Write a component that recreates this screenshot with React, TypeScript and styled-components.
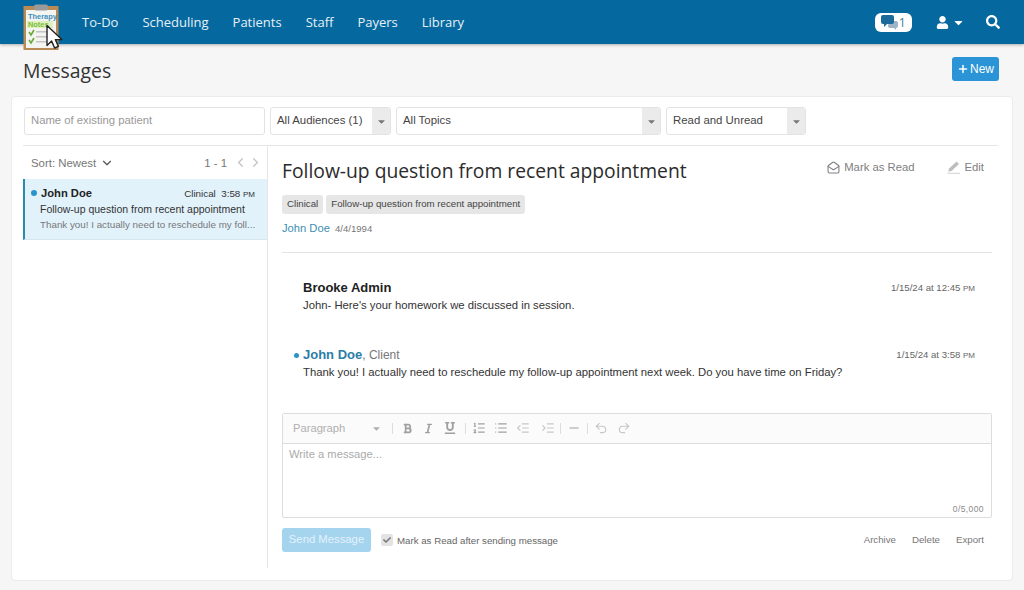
import React from 'react';
import styled, { createGlobalStyle } from 'styled-components';
import { FaBold, FaCaretDown, FaCheck, FaItalic, FaSearch, FaUnderline, FaUser } from 'react-icons/fa';
import {
    ChevronDown,
    ChevronLeft,
    ChevronRight,
    IndentDecrease,
    IndentIncrease,
    List,
    ListOrdered,
    MailOpen,
    Minus,
    Plus,
    Redo2,
    Undo2,
} from 'lucide-react';

const SANS = `'Liberation Sans', Arial, sans-serif`;
const HEADING = `'Open Sans', 'Noto Sans', sans-serif`;

const GlobalStyle = createGlobalStyle`
    html, body {
        margin: 0;
        padding: 0;
        height: 590px;
        overflow: hidden;
        background: #f6f6f6;
        font-family: ${SANS};
    }
    * {
        box-sizing: border-box;
    }
`;

const Nav = styled.header`
    display: flex;
    align-items: flex-start;
    height: 44px;
    padding: 0 24px 0 23px;
    background: #05689f;
    box-shadow: 0 1px 3px rgba(0, 0, 0, 0.3);
`;

const LogoWrap = styled.div`
    flex: none;
    width: 40px;
    height: 48px;
    margin: 4px 19px 0 0;
`;

const NavLink = styled.a`
    margin-right: 24px;
    font: 400 13px/44px ${HEADING};
    color: #e6f1f7;
`;

const NavRight = styled.div`
    display: flex;
    align-items: center;
    height: 44px;
    margin-left: auto;
    color: #fff;
`;

const ChatPill = styled.div`
    display: flex;
    align-items: center;
    justify-content: space-between;
    width: 37px;
    height: 19px;
    margin-right: 24px;
    padding: 0 6px;
    border-radius: 6px;
    background: #fff;
    color: #4e7fa0;
    font: 400 13px ${HEADING};
`;

const UserMenu = styled.div`
    display: flex;
    align-items: center;
    gap: 3px;
    margin-right: 21px;
`;

const PageHead = styled.div`
    display: flex;
    align-items: center;
    justify-content: space-between;
    height: 52px;
    padding: 0 25px 2px 23px;
`;

const Title = styled.h1`
    margin: 2px 0 0;
    font: 400 19.4px ${HEADING};
    color: #333;
`;

const NewButton = styled.button`
    display: flex;
    align-items: center;
    justify-content: center;
    gap: 1px;
    width: 47px;
    height: 24px;
    padding: 0;
    border: none;
    border-radius: 3px;
    background: #2a94d6;
    color: #fff;
    font: 400 12px ${SANS};
`;

const Card = styled.main`
    display: flex;
    flex-direction: column;
    width: 1002px;
    height: 485px;
    margin-left: 11px;
    padding: 10px 14px 12px 11px;
    border: 1px solid #ebebeb;
    border-radius: 4px;
    background: #fff;
`;

const Filters = styled.div`
    display: flex;
    gap: 5px;
    height: 39px;
    padding-bottom: 11px;
    border-bottom: 1px solid #e6e6e6;
`;

const PatientInput = styled.div`
    width: 241px;
    height: 28px;
    margin-left: 1px;
    padding-left: 6px;
    border: 1px solid #e3e3e3;
    border-radius: 3px;
    color: #999;
    font: 11.3px/25px ${SANS};
`;

const Select = styled.div<{ $width: number }>`
    display: flex;
    width: ${(p) => p.$width}px;
    height: 28px;
    border: 1px solid #e3e3e3;
    border-radius: 3px;
    overflow: hidden;
`;

const SelectValue = styled.div`
    flex: 1;
    padding-left: 6px;
    color: #444;
    font: 11.4px/25px ${SANS};
`;

const SelectArrow = styled.div`
    display: flex;
    align-items: center;
    justify-content: center;
    width: 18px;
    background: #ebebeb;
    color: #777;
`;

const Columns = styled.div`
    display: flex;
    flex: 1;
    min-height: 0;
`;

const ListColumn = styled.aside`
    flex: none;
    width: 244px;
`;

const SortRow = styled.div`
    display: flex;
    align-items: center;
    height: 33px;
    padding: 0 4px 0 8px;
    color: #777;
    font: 11.4px ${SANS};
`;

const Sort = styled.div`
    display: flex;
    align-items: center;
    gap: 4px;
    margin-right: auto;
`;

const Pager = styled.div`
    display: flex;
    align-items: center;
    color: #c4c4c4;
`;

const PagerCount = styled.span`
    margin-right: 6px;
    color: #777;
`;

const ListItem = styled.div`
    height: 61px;
    padding: 6px 12px 0 15px;
    border-left: 2px solid #2a8cab;
    border-bottom: 1px solid #d8e6ee;
    background: #e2f2fb;
    position: relative;
`;

const ItemTop = styled.div`
    display: flex;
    align-items: baseline;
    justify-content: space-between;
    height: 16px;
`;

const ItemName = styled.span`
    margin-left: 1px;
    font: 700 11.2px/16px ${SANS};
    color: #222;
`;

const ItemMeta = styled.span`
    font: 9.8px/16px ${SANS};
    color: #333;
    white-space: pre;
`;

const SmallCaps = styled.span`
    font-size: 8px;
`;

const ItemSubject = styled.div`
    font: 10.5px/16px ${SANS};
    color: #333;
    white-space: nowrap;
`;

const ItemPreview = styled.div`
    font: 9.8px/15px ${SANS};
    color: #777;
    white-space: nowrap;
`;

const UnreadDot = styled.span`
    display: inline-block;
    flex: none;
    width: 6px;
    height: 6px;
    border-radius: 50%;
    background: #2a94c9;
`;

const ItemDot = styled(UnreadDot)`
    position: absolute;
    left: 6px;
    top: 11px;
`;

const Detail = styled.section`
    display: flex;
    flex-direction: column;
    flex: 1;
    min-width: 0;
    padding: 0 6px 0 14px;
    border-left: 1px solid #e6e6e6;
`;

const DetailHead = styled.div`
    display: flex;
    align-items: flex-start;
    justify-content: space-between;
    height: 49px;
    padding: 11px 8px 0 0;
`;

const Subject = styled.h2`
    margin: 0;
    font: 400 19.3px/27px ${HEADING};
    color: #2b2b2b;
`;

const Actions = styled.div`
    display: flex;
    gap: 32px;
    padding-top: 2px;
`;

const Action = styled.a`
    display: flex;
    align-items: center;
    gap: 4px;
    color: #808080;
    font: 11.3px/16px ${SANS};
`;

const Tags = styled.div`
    display: flex;
    gap: 3px;
    height: 19px;
`;

const Tag = styled.span`
    padding: 0 5px;
    border-radius: 3px;
    background: #e6e6e6;
    color: #444;
    font: 9.7px/18px ${SANS};
`;

const Patient = styled.div`
    display: flex;
    align-items: baseline;
    gap: 5px;
    height: 39px;
    padding-top: 6px;
    border-bottom: 1px solid #e3e3e3;
`;

const PatientName = styled.a`
    color: #3d8fb0;
    font: 11.2px/16px ${SANS};
`;

const Dob = styled.span`
    color: #777;
    font: 9.6px/16px ${SANS};
`;

const Message = styled.article<{ $height: number }>`
    height: ${(p) => p.$height}px;
    padding: 0 17px 0 21px;
`;

const MessageHead = styled.div`
    display: flex;
    align-items: center;
    height: 18px;
    position: relative;
`;

const Sender = styled.span<{ $client?: boolean }>`
    color: ${(p) => (p.$client ? '#2b7ea6' : '#222')};
    font: 700 13px/18px ${SANS};
`;

const SenderRole = styled.span`
    color: #777;
    font: 12px/18px ${SANS};
    white-space: pre;
`;

const MessageTime = styled.span`
    margin-left: auto;
    color: #666;
    font: 9.6px/18px ${SANS};
`;

const MessageDot = styled(UnreadDot)`
    position: absolute;
    left: -9px;
    top: 7px;
    width: 5px;
    height: 5px;
`;

const MessageBody = styled.p`
    margin: 0;
    color: #333;
    font: 11.3px/16px ${SANS};
`;

const Thread = styled.div`
    height: 160px;
    padding-top: 26px;
`;

const Editor = styled.div`
    display: flex;
    flex-direction: column;
    height: 105px;
    border: 1px solid #ddd;
    border-radius: 2px;
`;

const Toolbar = styled.div`
    display: flex;
    align-items: center;
    flex: none;
    height: 30px;
    padding: 0 0 1px 10px;
    border-bottom: 1px solid #ddd;
    background: #fbfbfb;
    color: #a3a3a3;
`;

const FormatSelect = styled.div`
    display: flex;
    align-items: center;
    justify-content: space-between;
    width: 89px;
    margin-right: 10px;
    font: 11.2px ${SANS};
    color: #b0b0b0;
`;

const ToolButton = styled.span<{ $faint?: boolean; $width: number }>`
    display: flex;
    align-items: center;
    justify-content: center;
    width: ${(p) => p.$width}px;
    color: ${(p) => (p.$faint ? '#c8c8c8' : '#a0a0a0')};
`;

const ToolDivider = styled.span`
    flex: none;
    width: 1px;
    height: 11px;
    background: #ddd;
`;

const EditorBody = styled.div`
    position: relative;
    flex: 1;
    padding: 3px 6px;
    color: #aaa;
    font: 11.2px/14px ${SANS};
`;

const CharCount = styled.span`
    position: absolute;
    right: 7px;
    bottom: 3px;
    color: #8a8a8a;
    font: 8.5px ${SANS};
    letter-spacing: 0.4px;
`;

const Footer = styled.div`
    display: flex;
    align-items: center;
    height: 24px;
    margin-top: 10px;
`;

const SendButton = styled.button`
    width: 89px;
    height: 24px;
    margin-right: 10px;
    padding: 0 0 2px;
    border: none;
    border-radius: 3px;
    background: #a5d4ef;
    color: #e3f2fb;
    font: 11.3px ${SANS};
`;

const CheckBox = styled.span`
    display: flex;
    align-items: center;
    justify-content: center;
    width: 12px;
    height: 12px;
    margin-right: 4px;
    border-radius: 2px;
    background: #e3e3e3;
    color: #777;
`;

const CheckLabel = styled.span`
    color: #666;
    font: 9.7px ${SANS};
`;

const FooterLinks = styled.div`
    display: flex;
    gap: 16px;
    margin-left: auto;
    padding: 0 8px 2px 0;
    color: #777;
    font: 9.7px ${SANS};
`;

const Logo = () => (
    <svg width="40" height="48" viewBox="0 0 40 48">
        <rect x="0.5" y="2" width="35" height="44" fill="#b98a55" />
        <rect x="3" y="6" width="30" height="38" fill="#f4f4f0" />
        <rect x="11" y="0.5" width="14" height="6" rx="2" fill="#9a9a9a" />
        <text x="5" y="15" fontFamily="Liberation Sans" fontSize="7.4" fontWeight="700" fill="#3d8fc0">
            Therapy
        </text>
        <rect x="4" y="17" width="26" height="7" fill="#dff0c0" />
        <text x="5" y="23" fontFamily="Liberation Sans" fontSize="7.4" fontWeight="700" fill="#7cbf3a">
            Notes
        </text>
        <rect x="13" y="27" width="11" height="1.5" fill="#c4c4c4" />
        <rect x="13" y="32" width="11" height="1.5" fill="#c4c4c4" />
        <rect x="13" y="37" width="11" height="1.5" fill="#c4c4c4" />
        <path d="M6 28l2 3 3-5M6 36l2 3 3-5" fill="none" stroke="#6aa83a" strokeWidth="1.6" />
        <path
            d="M24 21.5v20l4.6-4.4 3 6.9 3.8-1.6-3-6.8h6.4z"
            fill="#fff"
            stroke="#222"
            strokeWidth="1.4"
            strokeLinejoin="round"
        />
    </svg>
);

const ChatIcon = () => (
    <svg width="17" height="15" viewBox="0 0 17 15">
        <path d="M8 6h7a2 2 0 0 1 2 2v3a2 2 0 0 1-2 2v2l-2-2H9a2 2 0 0 1-2-2z" fill="#9db4c6" />
        <path d="M2 0h9a2 2 0 0 1 2 2v5a2 2 0 0 1-2 2H6l-3 3V9H2a2 2 0 0 1-2-2V2a2 2 0 0 1 2-2z" fill="#1c6a9b" />
    </svg>
);

const PencilIcon = () => (
    <svg width="14" height="13" viewBox="0 0 14 13">
        <path d="M9.5 0.5l2.5 2.5-7.5 7-3.2 0.8 0.8-3.2z" fill="#bdbdbd" />
        <path d="M0.5 12.3h12.5" stroke="#d0d0d0" strokeWidth="1" />
    </svg>
);

const FilterSelect = ({ label, width }: { label: string; width: number }) => (
    <Select $width={width}>
        <SelectValue>{label}</SelectValue>
        <SelectArrow>
            <FaCaretDown size={11} />
        </SelectArrow>
    </Select>
);

export default function App() {
    return (
        <>
            <GlobalStyle />
            <Nav>
                <LogoWrap>
                    <Logo />
                </LogoWrap>
                {['To-Do', 'Scheduling', 'Patients', 'Staff', 'Payers', 'Library'].map((item) => (
                    <NavLink key={item}>{item}</NavLink>
                ))}
                <NavRight>
                    <ChatPill>
                        <ChatIcon />1
                    </ChatPill>
                    <UserMenu>
                        <FaUser size={13} />
                        <FaCaretDown size={13} />
                    </UserMenu>
                    <FaSearch size={14} />
                </NavRight>
            </Nav>
            <PageHead>
                <Title>Messages</Title>
                <NewButton>
                    <Plus size={12} strokeWidth={3} />
                    New
                </NewButton>
            </PageHead>
            <Card>
                <Filters>
                    <PatientInput>Name of existing patient</PatientInput>
                    <FilterSelect label="All Audiences (1)" width={121} />
                    <FilterSelect label="All Topics" width={265} />
                    <FilterSelect label="Read and Unread" width={140} />
                </Filters>
                <Columns>
                    <ListColumn>
                        <SortRow>
                            <Sort>
                                Sort: Newest
                                <ChevronDown size={14} color="#555" />
                            </Sort>
                            <Pager>
                                <PagerCount>1 - 1</PagerCount>
                                <ChevronLeft size={15} />
                                <ChevronRight size={15} />
                            </Pager>
                        </SortRow>
                        <ListItem>
                            <ItemDot />
                            <ItemTop>
                                <ItemName>John Doe</ItemName>
                                <ItemMeta>
                                    Clinical  3:58 <SmallCaps>PM</SmallCaps>
                                </ItemMeta>
                            </ItemTop>
                            <ItemSubject>Follow-up question from recent appointment</ItemSubject>
                            <ItemPreview>Thank you! I actually need to reschedule my foll...</ItemPreview>
                        </ListItem>
                    </ListColumn>
                    <Detail>
                        <DetailHead>
                            <Subject>Follow-up question from recent appointment</Subject>
                            <Actions>
                                <Action>
                                    <MailOpen size={13} />
                                    Mark as Read
                                </Action>
                                <Action>
                                    <PencilIcon />
                                    Edit
                                </Action>
                            </Actions>
                        </DetailHead>
                        <Tags>
                            <Tag>Clinical</Tag>
                            <Tag>Follow-up question from recent appointment</Tag>
                        </Tags>
                        <Patient>
                            <PatientName>John Doe</PatientName>
                            <Dob>4/4/1994</Dob>
                        </Patient>
                        <Thread>
                            <Message $height={67}>
                                <MessageHead>
                                    <Sender>Brooke Admin</Sender>
                                    <MessageTime>
                                        1/15/24 at 12:45 <SmallCaps>PM</SmallCaps>
                                    </MessageTime>
                                </MessageHead>
                                <MessageBody>John- Here's your homework we discussed in session.</MessageBody>
                            </Message>
                            <Message $height={60}>
                                <MessageHead>
                                    <MessageDot />
                                    <Sender $client>John Doe</Sender>
                                    <SenderRole>, Client</SenderRole>
                                    <MessageTime>
                                        1/15/24 at 3:58 <SmallCaps>PM</SmallCaps>
                                    </MessageTime>
                                </MessageHead>
                                <MessageBody>
                                    Thank you! I actually need to reschedule my follow-up appointment next week. Do you
                                    have time on Friday?
                                </MessageBody>
                            </Message>
                        </Thread>
                        <Editor>
                            <Toolbar>
                                <FormatSelect>
                                    Paragraph
                                    <FaCaretDown size={11} />
                                </FormatSelect>
                                <ToolDivider />
                                <ToolButton $width={28}>
                                    <FaBold size={11} />
                                </ToolButton>
                                <ToolButton $width={14}>
                                    <FaItalic size={11} />
                                </ToolButton>
                                <ToolButton $width={30}>
                                    <FaUnderline size={12} />
                                </ToolButton>
                                <ToolDivider />
                                <ToolButton $width={26}>
                                    <ListOrdered size={14} />
                                </ToolButton>
                                <ToolButton $width={18}>
                                    <List size={14} />
                                </ToolButton>
                                <ToolButton $faint $width={26}>
                                    <IndentDecrease size={14} />
                                </ToolButton>
                                <ToolButton $faint $width={24}>
                                    <IndentIncrease size={14} />
                                </ToolButton>
                                <ToolDivider />
                                <ToolButton $width={26}>
                                    <Minus size={14} />
                                </ToolButton>
                                <ToolDivider />
                                <ToolButton $faint $width={26}>
                                    <Undo2 size={14} />
                                </ToolButton>
                                <ToolButton $faint $width={20}>
                                    <Redo2 size={14} />
                                </ToolButton>
                            </Toolbar>
                            <EditorBody>
                                Write a message...
                                <CharCount>0/5,000</CharCount>
                            </EditorBody>
                        </Editor>
                        <Footer>
                            <SendButton>Send Message</SendButton>
                            <CheckBox>
                                <FaCheck size={8} />
                            </CheckBox>
                            <CheckLabel>Mark as Read after sending message</CheckLabel>
                            <FooterLinks>
                                <span>Archive</span>
                                <span>Delete</span>
                                <span>Export</span>
                            </FooterLinks>
                        </Footer>
                    </Detail>
                </Columns>
            </Card>
        </>
    );
}
